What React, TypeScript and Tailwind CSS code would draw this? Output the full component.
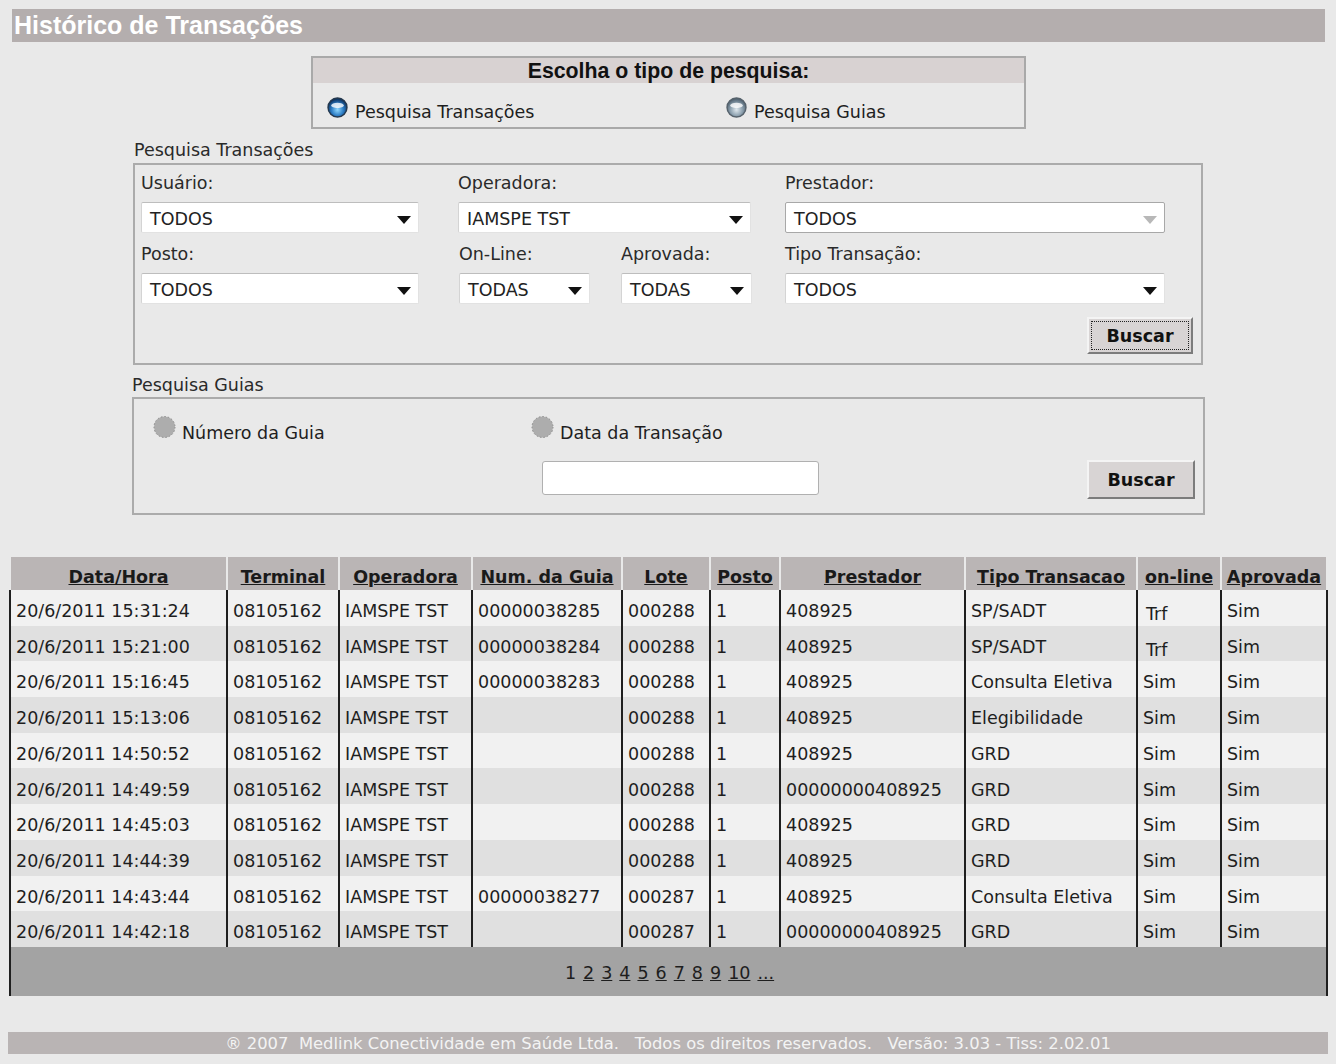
import React from "react";

const rows: string[][] = [
  ["20/6/2011 15:31:24", "08105162", "IAMSPE TST", "00000038285", "000288", "1", "408925", "SP/SADT", "Trf", "Sim"],
  ["20/6/2011 15:21:00", "08105162", "IAMSPE TST", "00000038284", "000288", "1", "408925", "SP/SADT", "Trf", "Sim"],
  ["20/6/2011 15:16:45", "08105162", "IAMSPE TST", "00000038283", "000288", "1", "408925", "Consulta Eletiva", "Sim", "Sim"],
  ["20/6/2011 15:13:06", "08105162", "IAMSPE TST", "", "000288", "1", "408925", "Elegibilidade", "Sim", "Sim"],
  ["20/6/2011 14:50:52", "08105162", "IAMSPE TST", "", "000288", "1", "408925", "GRD", "Sim", "Sim"],
  ["20/6/2011 14:49:59", "08105162", "IAMSPE TST", "", "000288", "1", "00000000408925", "GRD", "Sim", "Sim"],
  ["20/6/2011 14:45:03", "08105162", "IAMSPE TST", "", "000288", "1", "408925", "GRD", "Sim", "Sim"],
  ["20/6/2011 14:44:39", "08105162", "IAMSPE TST", "", "000288", "1", "408925", "GRD", "Sim", "Sim"],
  ["20/6/2011 14:43:44", "08105162", "IAMSPE TST", "00000038277", "000287", "1", "408925", "Consulta Eletiva", "Sim", "Sim"],
  ["20/6/2011 14:42:18", "08105162", "IAMSPE TST", "", "000287", "1", "00000000408925", "GRD", "Sim", "Sim"],
];

const headers = ["Data/Hora", "Terminal", "Operadora", "Num. da Guia", "Lote", "Posto", "Prestador", "Tipo Transacao", "on-line", "Aprovada"];

function Arrow({ light }: { light?: boolean }) {
  return (
    <svg width="14" height="8" viewBox="0 0 14 8" className="mt-[4px] shrink-0">
      <path d="M0 0 H14 L7 8 Z" fill={light ? "#b8b8b8" : "#111"} />
    </svg>
  );
}

function Select({ value, className, disabled }: { value: string; className: string; disabled?: boolean }) {
  return (
    <div
      className={
        "h-[31px] bg-white flex items-center justify-between pl-[8px] pr-[7px] rounded-[2px] border " +
        (disabled ? "border-[#a8a8a8] " : "border-[#e2e2e2] border-t-[#bdbdbd] border-l-[#d4d4d4] ") +
        className
      }
    >
      <span className="text-[17.5px] leading-none text-[#222] mt-[4px]">{value}</span>
      <Arrow light={disabled} />
    </div>
  );
}

function Label({ children, className = "" }: { children: React.ReactNode; className?: string }) {
  return <div className={"text-[17.5px] leading-[22px] text-[#2a2a2a] " + className}>{children}</div>;
}

function Button({ focused }: { focused?: boolean }) {
  return (
    <div className="w-full h-full bg-[#d8d4d4] border-2 border-t-[#f4f4f4] border-l-[#f4f4f4] border-b-[#7c7c7c] border-r-[#7c7c7c] flex items-center justify-center p-[2px]">
      <div
        className={
          "w-full h-full flex items-center justify-center border " +
          (focused ? "border-dotted border-[#222]" : "border-transparent")
        }
      >
        <span className="font-bold text-[17.5px] leading-none text-[#111] mt-[3px]">Buscar</span>
      </div>
    </div>
  );
}

function BlueRadio({ selected }: { selected?: boolean }) {
  const id = selected ? "rbsel" : "rbun";
  return (
    <svg width="21" height="21" viewBox="0 0 20 20" className="shrink-0">
      <defs>
        <radialGradient id={id} cx="50%" cy="62%" r="58%">
          <stop offset="0" stopColor={selected ? "#8fd8ff" : "#dfe8ee"} />
          <stop offset="0.55" stopColor={selected ? "#2c7cc4" : "#8ea2b0"} />
          <stop offset="1" stopColor={selected ? "#0b2f5c" : "#4f6170"} />
        </radialGradient>
      </defs>
      <circle cx="10" cy="10" r="9" fill={"url(#" + id + ")"} stroke={selected ? "#24384e" : "#56626c"} strokeWidth="1.4" />
      <ellipse cx="10" cy="8" rx="6" ry="2.6" fill="#ffffff" opacity="0.8" />
    </svg>
  );
}

function GrayRadio() {
  return (
    <svg width="23" height="24" viewBox="0 0 23 24" className="shrink-0">
      <circle cx="11.5" cy="12" r="10.5" fill="#adadad" />
      <circle cx="11.5" cy="12" r="10.5" fill="none" stroke="#8a8a8a" strokeWidth="1" strokeDasharray="1.5 2" />
    </svg>
  );
}

export default function App() {
  return (
    <div className="min-h-[1064px] w-full bg-[#e9e9e9] pt-[9px] font-['DejaVu_Sans','Verdana',sans-serif] text-[#1e1e1e]">
      {/* Title bar */}
      <div className="ml-[12px] w-[1313px] h-[33px] bg-[#b4aeae] flex items-center pl-[2px]">
        <span className="font-['Liberation_Sans',Arial,sans-serif] font-bold text-[25px] leading-none text-white">
          Histórico de Transações
        </span>
      </div>

      {/* Search type */}
      <div className="ml-[311px] mt-[14px] w-[715px] h-[73px] border-2 border-[#a9a9a9]">
        <div className="h-[25px] bg-[#d8d2d2] flex items-center justify-center">
          <span className="font-['Liberation_Sans',Arial,sans-serif] font-bold text-[21.3px] leading-none text-[#111] mt-[2px]">
            Escolha o tipo de pesquisa:
          </span>
        </div>
        <div className="h-[44px] flex items-center pl-[14px] pt-[5px]">
          <div className="w-[399px] flex items-center gap-[7px]">
            <BlueRadio selected />
            <span className="text-[17.5px] leading-none mt-[11px] text-[#1e1e1e]">Pesquisa Transações</span>
          </div>
          <div className="flex items-center gap-[7px]">
            <BlueRadio />
            <span className="text-[17.5px] leading-none mt-[11px] text-[#1e1e1e]">Pesquisa Guias</span>
          </div>
        </div>
      </div>

      {/* Pesquisa Transações */}
      <Label className="ml-[134px] mt-[10px]">Pesquisa Transações</Label>
      <div className="ml-[133px] mt-[2px] w-[1070px] border-2 border-[#ababab] pl-[6px] pt-[7px] pb-[9px]">
        <div className="flex">
          <div className="w-[278px]">
            <Label>Usuário:</Label>
            <Select value="TODOS" className="w-[278px] mt-[8px]" />
          </div>
          <div className="w-[293px] ml-[39px]">
            <Label>Operadora:</Label>
            <Select value="IAMSPE TST" className="w-[293px] mt-[8px]" />
          </div>
          <div className="w-[380px] ml-[34px]">
            <Label>Prestador:</Label>
            <Select value="TODOS" className="w-[380px] mt-[8px]" disabled />
          </div>
        </div>
        <div className="flex mt-[10px]">
          <div className="w-[278px]">
            <Label>Posto:</Label>
            <Select value="TODOS" className="w-[278px] mt-[8px]" />
          </div>
          <div className="w-[131px] ml-[40px]">
            <Label>On-Line:</Label>
            <Select value="TODAS" className="w-[131px] mt-[8px]" />
          </div>
          <div className="w-[131px] ml-[31px]">
            <Label>Aprovada:</Label>
            <Select value="TODAS" className="w-[131px] mt-[8px]" />
          </div>
          <div className="w-[380px] ml-[33px]">
            <Label>Tipo Transação:</Label>
            <Select value="TODOS" className="w-[380px] mt-[8px]" />
          </div>
        </div>
        <div className="flex justify-end mt-[13px] pr-[8px]">
          <div className="w-[106px] h-[37px]">
            <Button focused />
          </div>
        </div>
      </div>

      {/* Pesquisa Guias */}
      <Label className="ml-[132px] mt-[9px]">Pesquisa Guias</Label>
      <div className="ml-[132px] mt-[1px] w-[1073px] h-[118px] border-2 border-[#ababab] pl-[19px] pt-[16px]">
        <div className="flex h-[24px]">
          <div className="w-[378px] flex items-center gap-[6px]">
            <GrayRadio />
            <span className="text-[17.5px] leading-none mt-[14px] text-[#1e1e1e]">Número da Guia</span>
          </div>
          <div className="flex items-center gap-[6px]">
            <GrayRadio />
            <span className="text-[17.5px] leading-none mt-[14px] text-[#1e1e1e]">Data da Transação</span>
          </div>
        </div>
        <div className="flex mt-[21px] pr-[8px]">
          <div className="ml-[389px] mt-[1px] w-[277px] h-[34px] bg-white border border-[#b0b0b0] rounded-[3px]" />
          <div className="ml-auto w-[108px] h-[39px]">
            <Button />
          </div>
        </div>
      </div>

      {/* Table */}
      <div className="ml-[9px] mt-[42px] w-[1319px]">
        <div className="grid grid-cols-[217px_112px_133px_150px_88px_70px_185px_172px_84px_108px]">
          {headers.map((h, i) => (
            <div
              key={h}
              className={
                "h-[33px] bg-[#bab5b5] border-l-2 border-[#e9e9e9] flex items-center justify-center " +
                (i === headers.length - 1 ? "border-r-2" : "")
              }
            >
              <span className="font-bold underline text-[17.5px] leading-none text-[#1a1a1a] mt-[9px]">{h}</span>
            </div>
          ))}
          {rows.map((r, ri) =>
            r.map((c, ci) => (
              <div
                key={ri + "-" + ci}
                className={
                  "h-[35.7px] border-l-2 border-[#1f1f1f] flex items-center pl-[5px] whitespace-nowrap " +
                  (ri % 2 === 0 ? "bg-[#f1f1f1] " : "bg-[#e0e0e0] ") +
                  (ci === r.length - 1 ? "border-r-2" : "")
                }
              >
                <span className={"text-[17.5px] leading-none text-[#1e1e1e] " + (c === "Trf" ? "mt-[14px] pl-[3px]" : "mt-[8px]")}>
                  {c}
                </span>
              </div>
            ))
          )}
        </div>
        <div className="h-[49px] bg-[#a3a3a3] border-l-2 border-r-2 border-[#1f1f1f] flex items-center justify-center">
          <div className="flex gap-[7px] text-[17.5px] leading-none text-[#1e1e1e] ml-[2px] mt-[5px]">
            <span>1</span>
            {["2", "3", "4", "5", "6", "7", "8", "9", "10", "..."].map((p) => (
              <span key={p} className="underline">
                {p}
              </span>
            ))}
          </div>
        </div>
      </div>

      {/* Footer */}
      <div className="ml-[8px] mt-[36px] w-[1320px] h-[22px] bg-[#b9b4b4] flex items-center justify-center">
        <span className="whitespace-pre text-[16.4px] leading-none text-[#f3f3f3] mt-[2px]">
          {"® 2007  Medlink Conectividade em Saúde Ltda.   Todos os direitos reservados.   Versão: 3.03 - Tiss: 2.02.01"}
        </span>
      </div>
    </div>
  );
}
